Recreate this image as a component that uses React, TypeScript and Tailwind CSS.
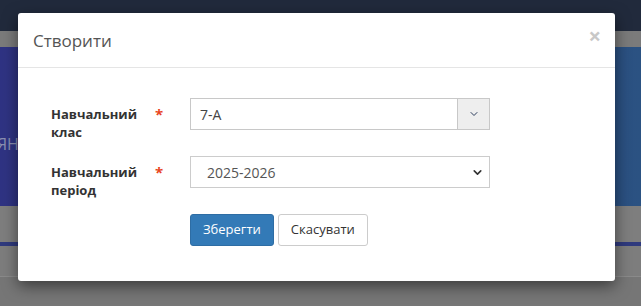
import { ChevronDown } from "lucide-react";

const Field = ({ label1, label2, children }: { label1: string; label2: string; children: React.ReactNode }) => (
  <div className="flex mb-[15px]">
    <div className="w-[139px] flex pt-[7px] shrink-0">
      <div className="w-[104px] text-[13px] leading-[18px] font-bold text-[#333]">
        {label1}
        <br />
        {label2}
      </div>
      <span className="text-[#e8461f] text-[15px] leading-[18px] font-bold">*</span>
    </div>
    {children}
  </div>
);

const App = () => {
  return (
    <div className="relative w-[641px] h-[306px] overflow-hidden bg-[#777] font-['Open_Sans',sans-serif]">
      {/* dimmed page behind the modal */}
      <div className="flex flex-col h-full">
        <div className="h-[31px] bg-[#212a3c]" />
        <div className="h-[16px] bg-[#7b7b7b]" />
        <div className="h-[159px] bg-gradient-to-r from-[#2f3383] via-[#2d3f82] to-[#2b5282] pt-[85px]">
          <span className="text-[#8a8fb0] text-[16px] leading-[20px] ml-[-3px]">ЯНУ</span>
        </div>
        <div className="h-[36px] bg-[#7e7e7e]" />
        <div className="h-[4px] bg-[#2f3a7e]" />
        <div className="h-[31px] bg-[#7d7d7d] border-b border-[#8a8a8a]" />
        <div className="flex-1 bg-[#767676]" />
      </div>

      {/* modal */}
      <div className="absolute left-[18px] top-[13px] w-[597px] bg-white rounded-[3px] shadow-[0_5px_15px_rgba(0,0,0,0.5)]">
        <div className="flex items-center justify-between h-[55px] px-[15px] border-b border-[#e5e5e5]">
          <h4 className="text-[17px] text-[#555] leading-none">Створити</h4>
          <span className="text-[22px] font-bold text-[#c8c8c8] leading-none mr-[-1px] mt-[-10px]">×</span>
        </div>
        <div className="pt-[30px] pb-[35px] px-[33px]">
          <Field label1="Навчальний" label2="клас">
            <div className="flex w-[300px] h-[32px] border border-[#c8c8c8]">
              <div className="flex-1 flex items-center pl-[9px] text-[14px] text-[#444]">7-A</div>
              <div className="w-[32px] bg-[#eeeeee] border-l border-[#c8c8c8] flex items-center justify-center">
                <ChevronDown className="w-[12px] h-[12px] text-[#2c3d5c]" strokeWidth={2} />
              </div>
            </div>
          </Field>
          <Field label1="Навчальний" label2="період">
            <div className="flex items-center justify-between w-[300px] h-[32px] border border-[#ccc] pl-[16px] pr-[5px]">
              <span className="text-[14px] text-[#555]">2025-2026</span>
              <ChevronDown className="w-[13px] h-[13px] text-[#333]" strokeWidth={3} />
            </div>
          </Field>
          <div className="flex gap-[4px] pl-[139px]">
            <button className="h-[32px] px-[12px] bg-[#337ab7] border border-[#2e6da4] rounded-[3px] text-white text-[13px]">
              Зберегти
            </button>
            <button className="h-[32px] px-[12px] bg-white border border-[#ccc] rounded-[3px] text-[#333] text-[13px]">
              Скасувати
            </button>
          </div>
        </div>
      </div>
    </div>
  );
};

export default App;
